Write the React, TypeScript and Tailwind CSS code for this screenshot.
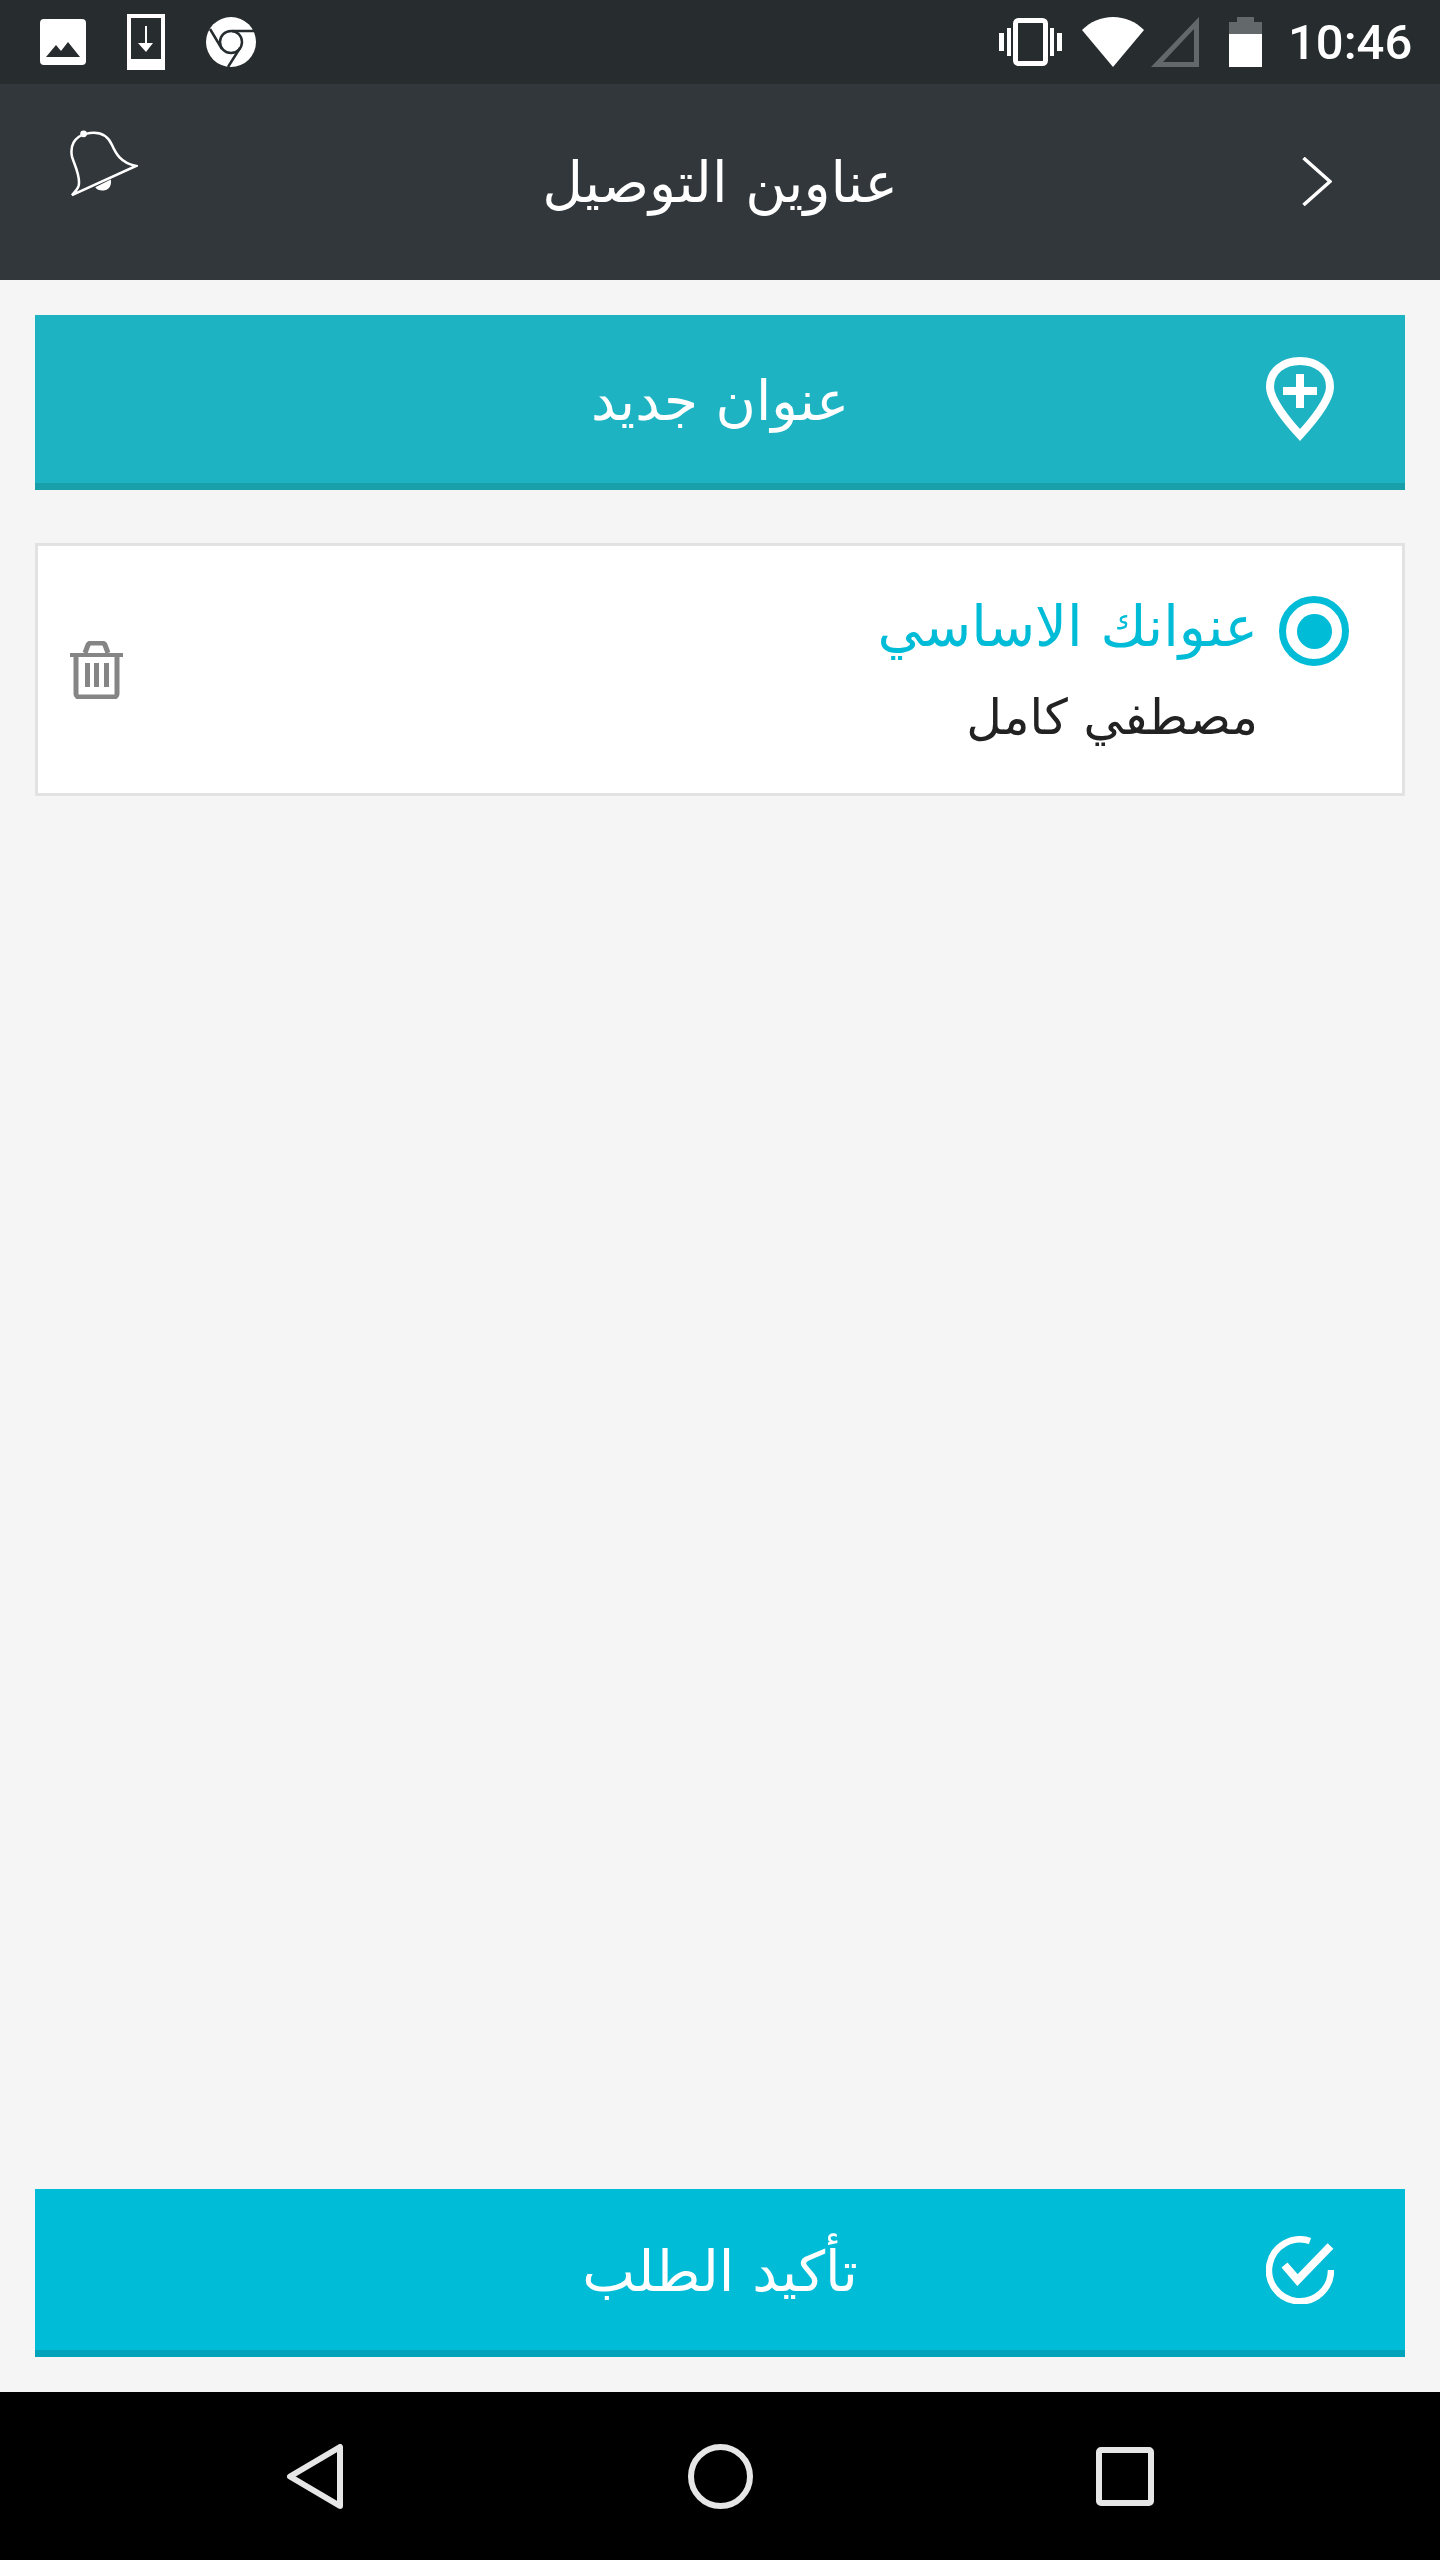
import React from "react";

const LIGHT = "font-['DejaVu_Sans_ExtraLight','DejaVu_Sans_Light','DejaVu_Sans',sans-serif]";

function StatusLeft() {
  return (
    <div className="flex items-center gap-[41px]">
      <svg width="46" height="46" viewBox="0 0 46 46">
        <path fillRule="evenodd" fill="#fff" d="M4 0H42a4 4 0 0 1 4 4V42a4 4 0 0 1-4 4H4a4 4 0 0 1-4-4V4a4 4 0 0 1 4-4ZM6 38H40L28 23 21 32 16 26Z" />
      </svg>
      <svg width="38" height="56" viewBox="0 0 38 56">
        <path fillRule="evenodd" fill="#fff" d="M0 0H38V56H0ZM4 4V45H34V4Z" />
        <path fill="#fff" d="M18 12H20V29H26L19 38 11 29H18Z" />
      </svg>
      <svg width="50" height="50" viewBox="0 0 50 50">
        <circle cx="25" cy="25" r="25" fill="#fff" />
        <circle cx="25" cy="25" r="11" fill="none" stroke="#272c2f" strokeWidth="2.5" />
        <path d="M4 12 16 32M26 14H50M34 31 22 50" stroke="#272c2f" strokeWidth="2.5" fill="none" />
      </svg>
    </div>
  );
}

function StatusRight() {
  return (
    <div className="flex items-center">
      <svg width="63" height="48" viewBox="0 0 63 48">
        <rect x="16.5" y="2.5" width="30" height="43" rx="3" fill="none" stroke="#fff" strokeWidth="5" />
        <rect x="0" y="15" width="5" height="18" fill="#fff" />
        <rect x="8" y="10" width="4" height="28" fill="#fff" />
        <rect x="51" y="10" width="4" height="28" fill="#fff" />
        <rect x="58" y="15" width="5" height="18" fill="#fff" />
      </svg>
      <svg className="ml-[20px]" width="62" height="50" viewBox="0 0 62 50">
        <path fill="#fff" d="M0 13C8 5 19 0 31 0S54 5 62 13L31 50Z" />
      </svg>
      <svg className="ml-[7px]" width="48" height="50" viewBox="0 0 48 50">
        <path fillRule="evenodd" fill="#63686b" d="M48 0V50H0ZM43 12 12 45H43Z" />
      </svg>
      <svg className="ml-[30px]" width="33" height="50" viewBox="0 0 33 50">
        <path fill="#63686b" d="M8 0H25V5H33V17H0V5H8Z" />
        <rect x="0" y="17" width="33" height="33" fill="#fff" />
      </svg>
      <span className="ml-[26px] font-['Roboto',sans-serif] font-medium text-[49px] leading-none text-white w-[120px]">10:46</span>
    </div>
  );
}

function Bell() {
  return (
    <svg width="68" height="68" viewBox="0 0 70 70" fill="none">
      <path d="M2 68 L68 38 C52 35 47 25 43 16 C38 5 28 2 16 5 C4 8 0 18 2 28 C4 36 11 48 9 58 C8 62 5 65 2 68 Z" stroke="#fff" strokeWidth="2.6" />
      <circle cx="14" cy="5" r="3.5" fill="#fff" />
      <path d="M26 60 L42 52 C43 57 41 62 36 63 C32 64 28 63 26 60 Z" fill="#fff" />
    </svg>
  );
}

function Pin() {
  return (
    <svg width="68" height="84" viewBox="0 0 68 84" fill="none">
      <path d="M34 78C22 65 4 43 4 30C4 14 17 4 34 4S64 14 64 30C64 43 46 65 34 78Z" stroke="#fff" strokeWidth="8" />
      <path fill="#fff" d="M30 17H38V30H51V38H38V51H30V38H17V30H30Z" />
    </svg>
  );
}

function Check() {
  return (
    <svg width="68" height="68" viewBox="0 0 68 68" fill="none">
      <path d="M44 5 A31 31 0 1 0 65 34" stroke="#fff" strokeWidth="6.500" />
      <path d="M18.500 29 31.500 44 64.500 10" stroke="#fff" strokeWidth="8" />
    </svg>
  );
}

function Trash() {
  return (
    <svg width="53" height="58" viewBox="0 0 53 58" fill="none">
      <path d="M0 12H53V16H0Z" fill="#858585" />
      <path d="M6 15V53C6 55 8 56 9 56H44C45 56 47 55 47 53V15" stroke="#858585" strokeWidth="5" />
      <path d="M15 12 18 4C18 3 20 2 21 2H32C33 2 35 3 35 4L38 12" stroke="#858585" strokeWidth="5" />
      <rect x="15" y="22" width="5" height="24" fill="#858585" />
      <rect x="24" y="22" width="5" height="24" fill="#858585" />
      <rect x="34" y="22" width="5" height="24" fill="#858585" />
    </svg>
  );
}

function ActionButton({ label, icon, base, text }: { label: string; icon: React.ReactNode; base: string; text: string }) {
  return (
    <div className={base}>
      <div className="flex justify-center w-[68px] mr-[71px]">{icon}</div>
      <span className={text}>{label}</span>
      <div />
    </div>
  );
}

export default function App() {
  return (
    <div className={`flex flex-col w-[1440px] h-[2560px] bg-[#f5f5f5] ${LIGHT}`}>
      <div className="flex items-center justify-between h-[84px] pl-[40px] pr-[32px] bg-[#272c2f]">
        <StatusLeft />
        <StatusRight />
      </div>
      <div dir="rtl" className="grid grid-cols-[1fr_auto_1fr] h-[196px] bg-[#32373b]">
        <div className="flex items-start pt-[73px] pr-[108px]">
          <svg width="30" height="49" viewBox="0 0 30 49" fill="none">
            <path d="M1.500 1 28 24.500 1.500 48" stroke="#fff" strokeWidth="3.500" />
          </svg>
        </div>
        <div className="flex items-center justify-center pt-[2px]">
          <span className="text-white text-[56px] leading-none whitespace-nowrap">عناوين التوصيل</span>
        </div>
        <div className="flex items-start justify-end pt-[45px] pl-[70px]">
          <Bell />
        </div>
      </div>
      <main dir="rtl" className="flex flex-col flex-1 px-[35px] py-[35px]">
        <ActionButton
          label="عنوان جديد"
          icon={<Pin />}
          text="text-white text-[55px] leading-none whitespace-nowrap pt-[5px]"
          base="grid grid-cols-[1fr_auto_1fr] items-center h-[175px] bg-[#1eb3c3] border-b-[7px] border-[#199fa9]"
        />
        <div className="flex items-center justify-between h-[253px] mt-[53px] pr-[53px] pl-[32px] bg-white border-[3px] border-[#e2e2e2]">
          <div className="flex items-start gap-[21px] pt-[6px]">
            <div className="flex items-center justify-center w-[70px] h-[70px] mt-[4px] rounded-full border-[7px] border-[#00bcd6]">
              <div className="w-[35px] h-[35px] rounded-full bg-[#00bcd6]" />
            </div>
            <div className="flex flex-col">
              <span className="text-[#00bcd6] text-[56px] leading-[70px] whitespace-nowrap">عنوانك الاساسي</span>
              <span className="text-[#222222] text-[49px] leading-[70px] mt-[21px] whitespace-nowrap">مصطفي كامل</span>
            </div>
          </div>
          <Trash />
        </div>
        <div className="flex-1" />
        <ActionButton
          label="تأكيد الطلب"
          icon={<Check />}
          text="text-white text-[56px] leading-none whitespace-nowrap pt-[5px]"
          base="grid grid-cols-[1fr_auto_1fr] items-center h-[168px] bg-[#00bcd6] border-b-[7px] border-[#00a3b9]"
        />
      </main>
      <nav className="flex items-center h-[168px] bg-black pl-[287px] pr-[286px] justify-between">
        <svg width="57" height="65" viewBox="0 0 57 65" fill="none">
          <path d="M53 3V62L3 32.500Z" stroke="#e6e6e6" strokeWidth="6" strokeLinejoin="round" />
        </svg>
        <svg width="65" height="65" viewBox="0 0 65 65" fill="none">
          <circle cx="32.500" cy="32.500" r="29.500" stroke="#e6e6e6" strokeWidth="6" />
        </svg>
        <svg width="58" height="59" viewBox="0 0 58 59" fill="none">
          <rect x="3" y="3" width="52" height="53" rx="2" stroke="#e6e6e6" strokeWidth="6" />
        </svg>
      </nav>
    </div>
  );
}
